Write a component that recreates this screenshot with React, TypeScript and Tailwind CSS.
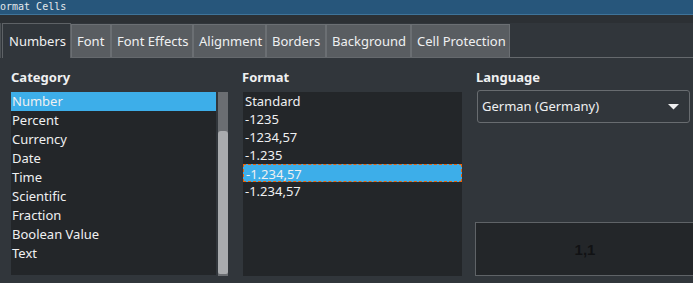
const categories = [
  "Number",
  "Percent",
  "Currency",
  "Date",
  "Time",
  "Scientific",
  "Fraction",
  "Boolean Value",
  "Text",
];

const formats = ["Standard", "-1235", "-1234,57", "-1.235", "-1.234,57", "-1.234,57"];

const tabs = [
  { label: "Font", w: "w-[40px]" },
  { label: "Font Effects", w: "w-[82px]" },
  { label: "Alignment", w: "w-[73px]" },
  { label: "Borders", w: "w-[60px]" },
  { label: "Background", w: "w-[85px]" },
  { label: "Cell Protection", w: "w-[99px]" },
];

export default function App() {
  return (
    <div
      className="w-[693px] h-[283px] overflow-hidden bg-[#31363b] text-[#eff0f1] text-[13px]"
      style={{ fontFamily: '"Noto Sans", sans-serif' }}
    >
      {/* Title bar */}
      <div className="h-[14px] bg-[#27567b] flex items-center">
        <span
          className="text-[10px] leading-none text-[#e3e8ec]"
          style={{ fontFamily: '"DejaVu Sans Mono", monospace' }}
        >
          ormat Cells
        </span>
      </div>
      <div className="h-px bg-[#3f7399]" />
      <div className="h-[8px] bg-[#2c3034]" />

      {/* Tabs */}
      <div className="flex h-[35px] pl-[1px] border-l border-[#4d5256]">
        <div className="w-[69px] h-[35px] border-l border-t border-r border-[#5e6266] bg-[#31363b] flex items-center pl-[6px] pt-[2px]">
          Numbers
        </div>
        <div className="flex flex-1 pt-[1px] border-b border-[#65696d]">
          {tabs.map((t) => (
            <div
              key={t.label}
              className={`${t.w} h-[33px] bg-[#595d61] border-l border-t border-r border-[#6b6f73] flex items-center pl-[5px] pt-[2px] whitespace-nowrap`}
            >
              {t.label}
            </div>
          ))}
        </div>
      </div>

      {/* Content */}
      <div className="flex pt-[10px]">
        {/* Category */}
        <div className="ml-[11px] w-[217px]">
          <div className="h-[23px] font-bold leading-[18px]">Category</div>
          <div className="flex h-[184px] pt-[1px]">
            <div className="w-[205px] h-[183px] bg-[#232629]">
              {categories.map((c, i) => (
                <div
                  key={c}
                  className={`h-[19px] leading-[19px] pl-[1px] ${i === 0 ? "bg-[#3daee9]" : ""}`}
                >
                  {c}
                </div>
              ))}
            </div>
            <div className="ml-[2px] w-[10px] h-[184px] bg-[#6b6e72] flex flex-col justify-end pb-[2px]">
              <div className="h-[143px] bg-[#a9abae] rounded-t-[3px] rounded-b-[2px]" />
            </div>
          </div>
        </div>

        {/* Format */}
        <div className="ml-[15px] w-[219px]">
          <div className="h-[23px] font-bold leading-[18px] -ml-px">Format</div>
          <div className="w-[219px] h-[184px] mt-px bg-[#232629]">
            {formats.map((f, i) => (
              <div
                key={i}
                className={`h-[18px] leading-[18px] pl-[2px] ${
                  i === 4 ? "bg-[#3daee9] border border-dashed border-[#e8630a] pl-[1px] leading-[16px]" : ""
                }`}
              >
                {f}
              </div>
            ))}
          </div>
        </div>

        {/* Language */}
        <div className="ml-[13px] flex-1 flex flex-col">
          <div className="h-[22px] font-bold leading-[18px] ml-px">Language</div>
          <div className="ml-[2px] w-[213px] h-[33px] border border-[#686c70] rounded-[3px] flex items-center justify-between pl-[4px] pr-[10px]">
            <span>German (Germany)</span>
            <svg width="11" height="6" viewBox="0 0 11 6">
              <path d="M0 0 L11 0 L5.5 5.5 Z" fill="#eff0f1" />
            </svg>
          </div>
          <div className="mt-[99px] h-[54px] w-[220px] border border-[#5f6367] bg-[#232629] flex items-center justify-center">
            <span
              className="text-[#111214] font-bold text-[15px] pt-[2px]"
              style={{ fontFamily: '"Liberation Sans", sans-serif' }}
            >
              1,1
            </span>
          </div>
        </div>
      </div>
    </div>
  );
}
